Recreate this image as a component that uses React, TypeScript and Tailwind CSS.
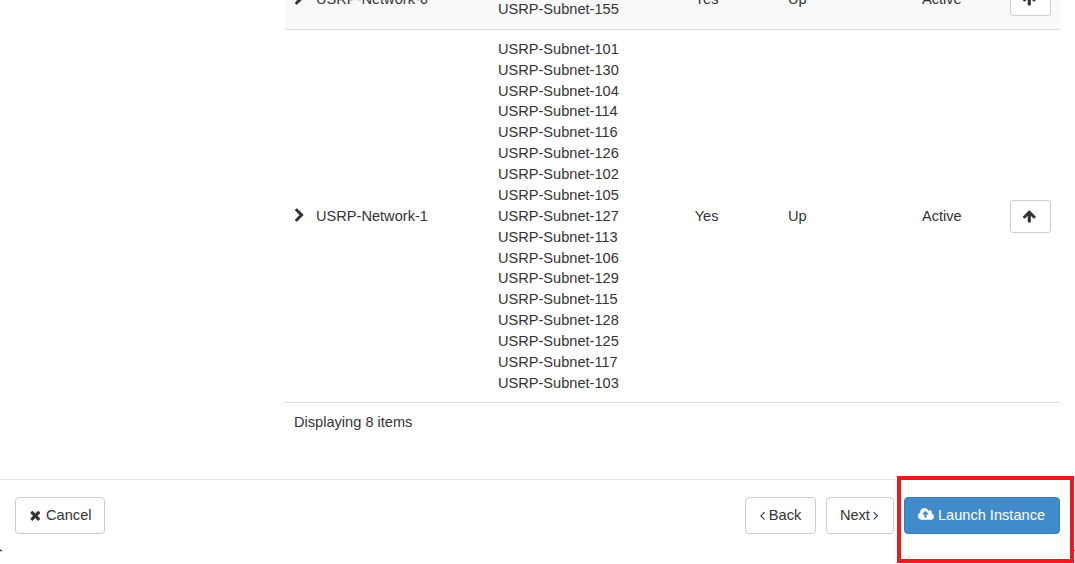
const CHEVRON =
  "M1363 877l-742 742q-19 19-45 19t-45-19l-166-166q-19-19-19-45t19-45l531-531-531-531q-19-19-19-45t19-45l166-166q19-19 45-19t45 19l742 742q19 19 19 45t-19 45z";
const TIMES =
  "M1490 1322q0 40-28 68l-136 136q-28 28-68 28t-68-28l-294-294-294 294q-28 28-68 28t-68-28l-136-136q-28-28-28-68t28-68l294-294-294-294q-28-28-28-68t28-68l136-136q28-28 68-28t68 28l294 294 294-294q28-28 68-28t68 28l136 136q28 28 28 68t-28 68l-294 294 294 294q28 28 28 68z";
const ARROW_UP =
  "M1675 971q0 51-37 90l-75 75q-38 38-91 38-54 0-90-38l-294-293v704q0 52-37.5 84.5t-90.5 32.5h-128q-53 0-90.5-32.5t-37.5-84.5v-704l-294 293q-36 38-90 38t-90-38l-75-75q-38-38-38-90 0-53 38-91l651-651q35-37 90-37 54 0 91 37l651 651q37 39 37 91z";
const CLOUD_UPLOAD =
  "M1216 864q0-14-9-23l-352-352q-9-9-23-9t-23 9l-351 351q-10 12-10 24 0 14 9 23t23 9h224v352q0 13 9.5 22.5t22.5 9.5h192q13 0 22.5-9.5t9.5-22.5v-352h224q13 0 22.5-9.5t9.5-22.5zm640 288q0 159-112.5 271.5t-271.5 112.5h-1088q-185 0-316.5-131.5t-131.5-316.5q0-130 70-240t188-165q-2-30-2-43 0-212 150-362t362-150q156 0 285.5 87t188.5 231q71-62 166-62 106 0 181 75t75 181q0 76-41 138 130 31 213.5 135.5t83.5 238.5z";
const ANGLE =
  "M1203 544q0 13-10 23l-393 393 393 393q10 10 10 23t-10 23l-50 50q-10 10-23 10t-23-10l-466-466q-10-10-10-23t10-23l466-466q10-10 23-10t23 10l50 50q10 10 10 23z";

function Icon({ d, viewBox = "0 0 1792 1792", className }: { d: string; viewBox?: string; className: string }) {
  return (
    <svg viewBox={viewBox} className={`shrink-0 fill-current ${className}`} aria-hidden="true">
      <path d={d} />
    </svg>
  );
}

type Network = { name: string; subnets: string[]; className: string; subnetClass: string };

const networks: Network[] = [
  {
    name: "USRP-Network-6",
    subnets: ["155"],
    className: "-mt-[31px] h-[61px] bg-[#f9f9f9]",
    subnetClass: "self-end pb-[9px]",
  },
  {
    name: "USRP-Network-1",
    subnets: [
      "101", "130", "104", "114", "116", "126", "102", "105", "127",
      "113", "106", "129", "115", "128", "125", "117", "103",
    ],
    className: "h-[373px]",
    subnetClass: "pt-[0.5px]",
  },
];

function NetworkRow({ network }: { network: Network }) {
  return (
    <div
      className={`grid shrink-0 grid-cols-[31px_181.9px_196.8px_93.3px_134px_88px_50px] items-center border-b border-[#dddddd] ${network.className}`}
    >
      <Icon d={CHEVRON} className="mb-[2px] ml-[6.5px] size-[15px]" />
      <span>{network.name}</span>
      <div className={network.subnetClass}>
        {network.subnets.map((id) => (
          <div key={id}>USRP-Subnet-{id}</div>
        ))}
      </div>
      <span>Yes</span>
      <span>Up</span>
      <span>Active</span>
      <button
        aria-label="Allocate"
        className="flex h-[33px] w-[41px] items-center justify-center rounded-[3px] border border-[#cccccc] bg-white"
      >
        <Icon d={ARROW_UP} className="mr-[2px] size-[14.6px]" />
      </button>
    </div>
  );
}

const button = "flex h-[37px] items-center justify-center rounded-[4px] border";

export default function App() {
  return (
    <div className="relative flex h-[564px] w-[1075px] flex-col overflow-hidden bg-white font-['Liberation_Sans',Arial,sans-serif] text-[14.6px] leading-[20.88px] text-[#333333]">
      <main className="ml-[285px] flex h-[479px] w-[775px] shrink-0 flex-col">
        {networks.map((network) => (
          <NetworkRow key={network.name} network={network} />
        ))}
        <div className="px-[9px] pt-[9px]">Displaying 8 items</div>
      </main>

      <footer className="flex h-[85px] shrink-0 items-start border-t border-[#e5e5e5] px-[15px] pt-[17px]">
        <button className={`${button} w-[90px] gap-[3px] border-[#cccccc] bg-white`}>
          <Icon d={TIMES} className="-mt-px size-[14.6px]" />
          Cancel
        </button>
        <div className="ml-auto flex gap-[10px]">
          <button className={`${button} w-[71px] gap-[4px] border-[#cccccc] bg-white`}>
            <Icon d={ANGLE} viewBox="600 0 640 1792" className="-mt-px h-[14.6px] w-[5.2px]" />
            Back
          </button>
          <button className={`${button} w-[68px] gap-[3px] border-[#cccccc] bg-white pr-[2px]`}>
            Next
            <Icon d={ANGLE} viewBox="600 0 640 1792" className="mt-px h-[14.6px] w-[5.2px] rotate-180" />
          </button>
          <button className={`${button} w-[156px] gap-[4px] border-[#357ebd] bg-[#428bca] pr-[1px] text-white`}>
            <Icon d={CLOUD_UPLOAD} viewBox="-64 0 1920 1792" className="-mt-[2px] h-[15px] w-[16px]" />
            Launch Instance
          </button>
        </div>
      </footer>

      <div className="pointer-events-none absolute top-[476px] left-[897px] h-[87px] w-[177px] border-4 border-[#e81c1e]" />
      <svg viewBox="0 0 3 3" className="absolute top-[549px] left-0 size-[3px] fill-[#444444]" aria-hidden="true">
        <path d="M0 0L3 2.2H0Z" />
      </svg>
      <div className="absolute top-[550px] left-[1074px] size-px bg-[#555555]" />
    </div>
  );
}
